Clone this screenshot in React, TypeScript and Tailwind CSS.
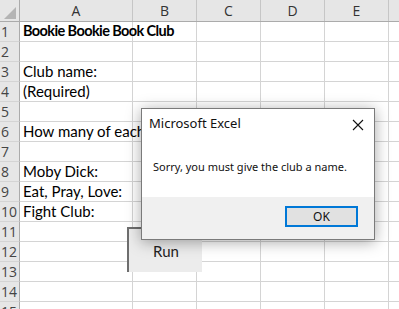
import React from "react";

const cols = [
  { name: "A", w: 113 },
  { name: "B", w: 64 },
  { name: "C", w: 64 },
  { name: "D", w: 64 },
  { name: "E", w: 64 },
  { name: "", w: 40 },
];

const cellText: Record<number, { text: string; bold?: boolean }> = {
  1: { text: "Bookie Bookie Book Club", bold: true },
  3: { text: "Club name:" },
  4: { text: "(Required)" },
  6: { text: "How many of each title?" },
  8: { text: "Moby Dick:" },
  9: { text: "Eat, Pray, Love:" },
  10: { text: "Fight Club:" },
};

export default function App() {
  const rows = Array.from({ length: 15 }, (_, i) => i + 1);
  return (
    <div
      className="relative w-[399px] h-[309px] overflow-hidden bg-white"
      style={{ fontFamily: "Lato, 'Open Sans', sans-serif" }}
    >
      {/* header row */}
      <div className="flex h-[22px] bg-[#e6e6e6] border-b border-[#ababab]">
        <div className="relative w-[20px] shrink-0 border-r border-[#ababab]">
          <div
            className="absolute left-[4px] top-[7px] w-[12px] h-[12px] bg-[#b4b4b4]"
            style={{ clipPath: "polygon(100% 0, 100% 100%, 0 100%)" }}
          />
        </div>
        {cols.map((c, i) => (
          <div
            key={i}
            className="shrink-0 flex items-center justify-center border-r border-[#c6c6c6] text-[14px] text-[#333] leading-none pt-[1px]"
            style={{ width: c.w, fontFamily: "'Open Sans', sans-serif" }}
          >
            {c.name}
          </div>
        ))}
      </div>
      {rows.map((r) => (
        <div key={r} className="flex h-[20px]">
          <div className="w-[20px] shrink-0 bg-[#e6e6e6] border-r border-[#ababab] border-b border-b-[#d4d4d4] flex items-center pl-[1px] text-[14px] text-[#444] leading-none" style={{ fontFamily: "'Open Sans', sans-serif" }}>
            {r}
          </div>
          {cols.map((c, i) => (
            <div
              key={i}
              className="shrink-0 border-r border-b border-[#d4d4d4] relative"
              style={{ width: c.w }}
            >
              {i === 0 && cellText[r] && (
                <span
                  className={`absolute left-[3px] top-0 h-[19px] flex items-center whitespace-nowrap text-black leading-none ${cellText[r].bold ? "font-bold text-[14.5px] tracking-[-0.6px]" : "text-[15px]"}`}
                >
                  {cellText[r].text}
                </span>
              )}
            </div>
          ))}
        </div>
      ))}

      {/* Run button */}
      <div className="absolute left-[127px] top-[227px] w-[75px] h-[45px] bg-[#ececec] border-l-2 border-t-2 border-[#6e6e6e] flex items-center justify-center pl-[1px] text-[15px] text-[#222]">
        <span className="mt-[2px]">Run</span>
      </div>

      {/* Dialog */}
      <div
        className="absolute left-[141px] top-[108px] w-[234px] h-[132px] bg-white border border-[#7a7a7a] shadow-[0_2px_14px_rgba(0,0,0,0.35)] flex flex-col"
        style={{ fontFamily: "'Noto Sans', 'Open Sans', sans-serif" }}
      >
        <div className="flex items-center justify-between h-[30px] pl-[7px] pr-[10px]">
          <span className="text-[13px] text-[#111]">Microsoft Excel</span>
          <svg width="12" height="12" viewBox="0 0 12 12" className="mt-[1px]">
            <path d="M1 1 L11 11 M11 1 L1 11" stroke="#111" strokeWidth="1.1" />
          </svg>
        </div>
        <div className="flex-1 flex items-center pl-[11px] pb-[1px] text-[11px] text-[#111]">
          Sorry, you must give the club a name.
        </div>
        <div className="h-[42px] bg-[#f0f0f0] flex items-start justify-end pr-[16px] pt-[9px]">
          <div className="w-[73px] h-[21px] border-2 border-[#0078d7] bg-[#e1e1e1] flex items-center justify-center text-[12px] text-[#111]">
            OK
          </div>
        </div>
      </div>
    </div>
  );
}
